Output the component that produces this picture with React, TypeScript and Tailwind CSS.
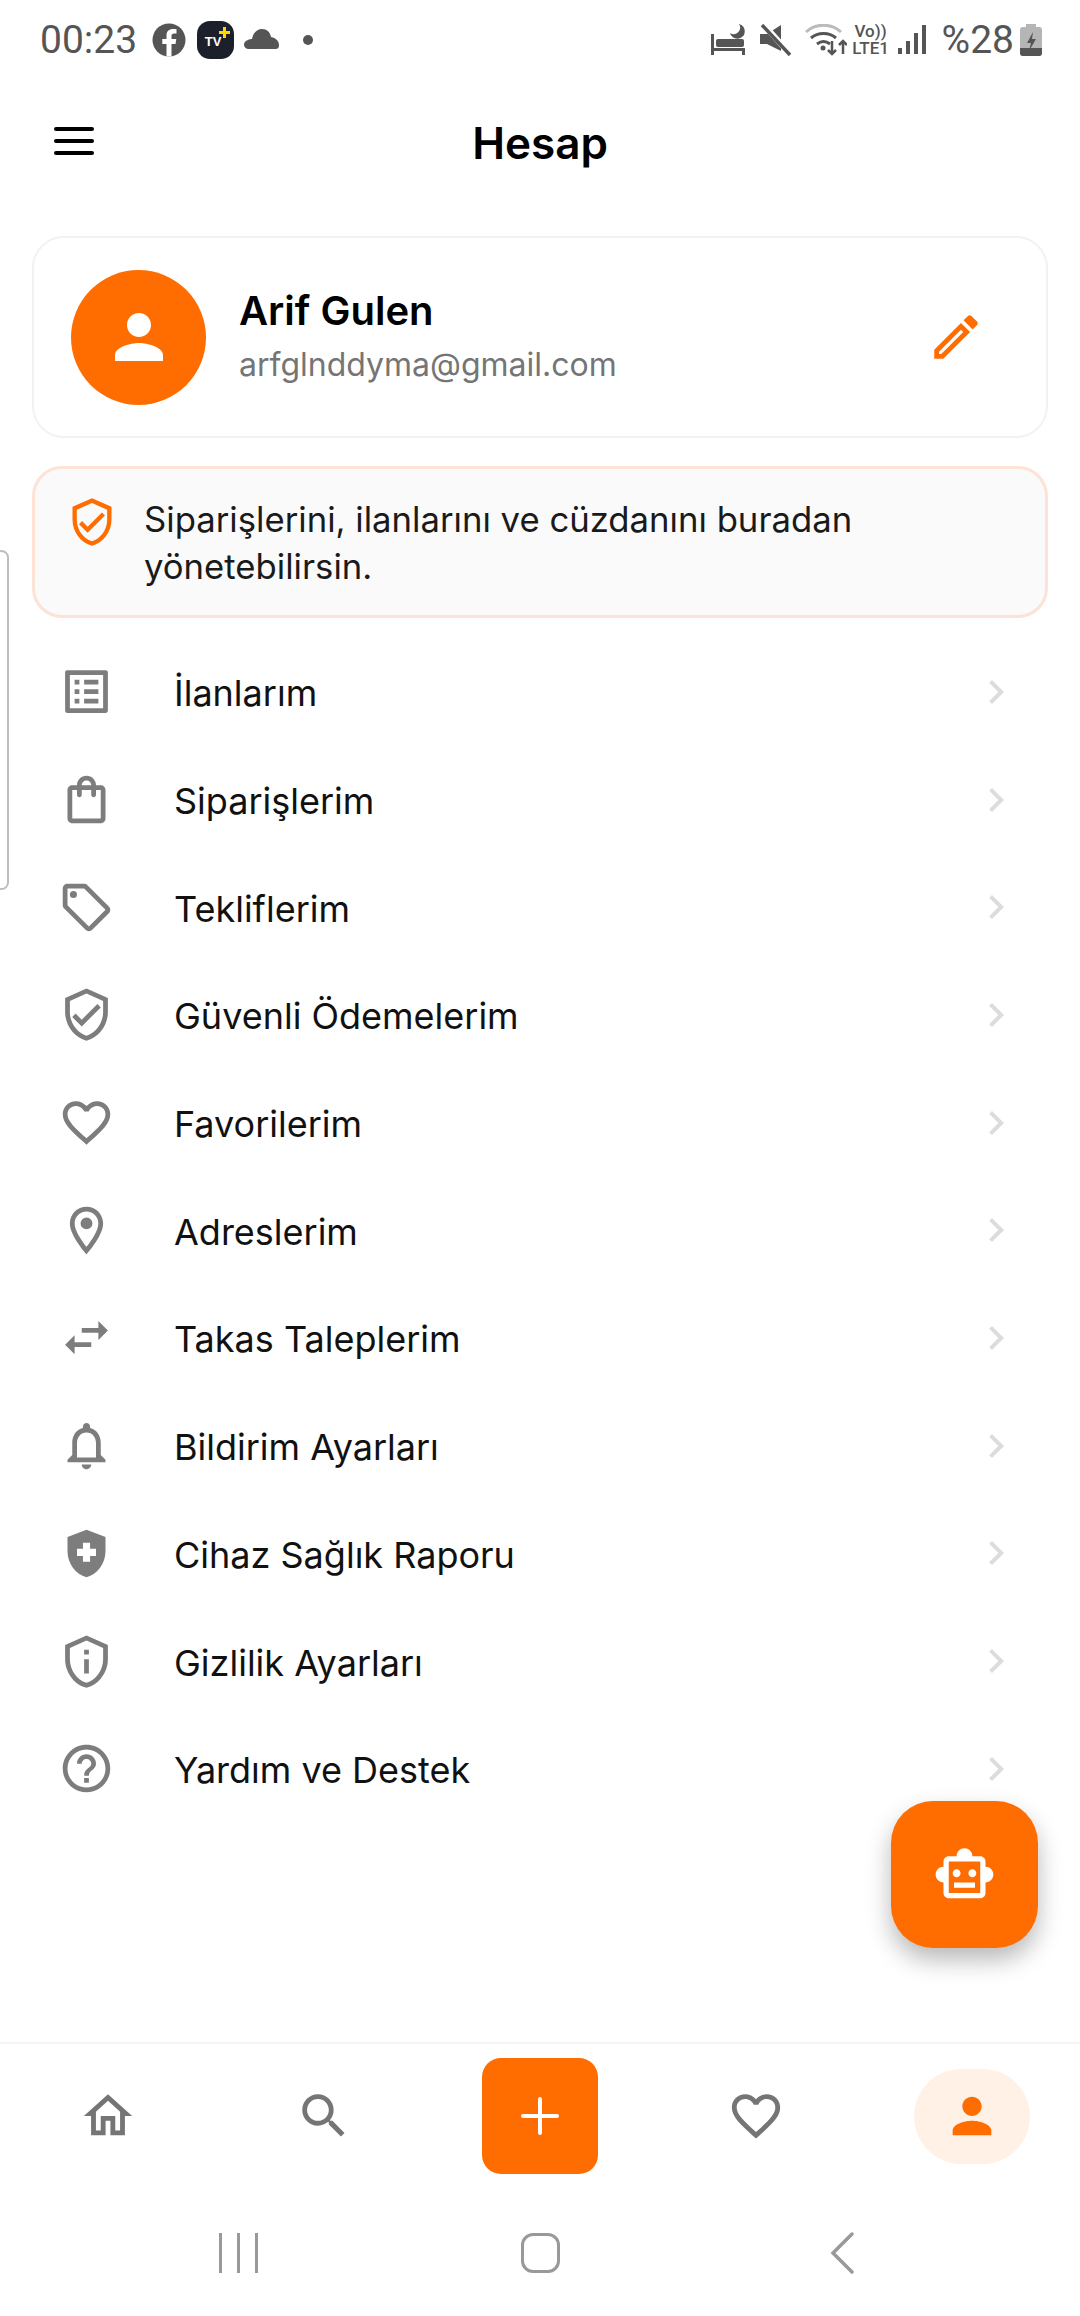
import React from 'react';

const ORANGE = '#ff6d00';

const icons = {
  list: 'M19 5v14H5V5h14m1.1-2H3.9c-.5 0-.9.4-.9.9v16.2c0 .4.4.9.9.9h16.2c.4 0 .9-.5.9-.9V3.9c0-.5-.5-.9-.9-.9zM11 7h6v2h-6V7zm0 4h6v2h-6v-2zm0 4h6v2h-6zM7 7h2v2H7zm0 4h2v2H7zm0 4h2v2H7z',
  bag: 'M18 6h-2c0-2.21-1.79-4-4-4S8 3.79 8 6H6c-1.1 0-2 .9-2 2v12c0 1.1.9 2 2 2h12c1.1 0 2-.9 2-2V8c0-1.1-.9-2-2-2zm-6-2c1.1 0 2 .9 2 2h-4c0-1.1.9-2 2-2zm6 16H6V8h2v2c0 .55.45 1 1 1s1-.45 1-1V8h4v2c0 .55.45 1 1 1s1-.45 1-1V8h2v12z',
  tag: 'M21.41 11.58l-9-9C12.05 2.22 11.55 2 11 2H4c-1.1 0-2 .9-2 2v7c0 .55.22 1.05.59 1.42l9 9c.36.36.86.58 1.41.58s1.05-.22 1.41-.59l7-7c.37-.36.59-.86.59-1.41s-.23-1.06-.59-1.42zM13 20.01L4 11V4h7v-.01l9 9-7 7.02zM6.5 5A1.5 1.5 0 1 0 6.5 8A1.5 1.5 0 1 0 6.5 5z',
  shieldCheck: 'M12 1L3 5v6c0 5.55 3.84 10.74 9 12 5.16-1.26 9-6.45 9-12V5l-9-4zm7 10c0 4.52-2.98 8.69-7 9.93-4.02-1.24-7-5.41-7-9.93V6.3l7-3.11 7 3.11V11zm-11.59.59L6 13l4 4 8-8-1.41-1.42L10 14.17z',
  heart: 'M16.5 3c-1.74 0-3.41.81-4.5 2.09C10.91 3.81 9.24 3 7.5 3 4.42 3 2 5.42 2 8.5c0 3.78 3.4 6.86 8.55 11.54L12 21.35l1.45-1.32C18.6 15.36 22 12.28 22 8.5 22 5.42 19.58 3 16.5 3zm-4.4 15.55l-.1.1-.1-.1C7.14 14.24 4 11.39 4 8.5 4 6.5 5.5 5 7.5 5c1.54 0 3.04.99 3.57 2.36h1.87C13.46 5.99 14.96 5 16.5 5c2 0 3.5 1.5 3.5 3.5 0 2.89-3.14 5.74-7.9 10.05z',
  pin: 'M12 2C8.13 2 5 5.13 5 9c0 5.25 7 13 7 13s7-7.75 7-13c0-3.87-3.13-7-7-7zM7 9c0-2.76 2.24-5 5-5s5 2.24 5 5c0 2.88-2.88 7.19-5 9.88C9.92 16.21 7 11.85 7 9zM12 6.5A2.5 2.5 0 1 0 12 11.5A2.5 2.5 0 1 0 12 6.5z',
  swap: 'M6.99 11L3 15l3.99 4v-3H14v-2H6.99v-3zM21 9l-4-4v3h-7v2h7v3l4-4z',
  bell: 'M12 22c1.1 0 2-.9 2-2h-4c0 1.1.9 2 2 2zm6-6v-5c0-3.07-1.63-5.64-4.5-6.32V4c0-.83-.67-1.5-1.5-1.5s-1.5.67-1.5 1.5v.68C7.64 5.36 6 7.92 6 11v5l-2 2v1h16v-1l-2-2zm-2 1H8v-6c0-2.48 1.51-4.5 4-4.5s4 2.02 4 4.5v6z',
  health: 'M10.5 13H8v-3h2.5V7.5h3V10H16v3h-2.5v2.5h-3V13zM12 2L4 5v6.09c0 5.05 3.41 9.76 8 10.91 4.59-1.15 8-5.86 8-10.91V5l-8-3z',
  privacy: 'M12 3.19l7 3.11V11c0 4.52-2.98 8.69-7 9.93-4.02-1.24-7-5.41-7-9.93V6.3l7-3.11M12 1L3 5v6c0 5.55 3.84 10.74 9 12 5.16-1.26 9-6.45 9-12V5l-9-4zm-1 6h2v2h-2zm0 4h2v6h-2z',
  help: 'M11 18h2v-2h-2v2zm1-16C6.48 2 2 6.48 2 12s4.48 10 10 10 10-4.48 10-10S17.52 2 12 2zm0 18c-4.41 0-8-3.59-8-8s3.59-8 8-8 8 3.59 8 8-3.59 8-8 8zm0-14c-2.21 0-4 1.79-4 4h2c0-1.1.9-2 2-2s2 .9 2 2c0 2-3 1.75-3 5h2c0-2.25 3-2.5 3-5 0-2.21-1.79-4-4-4z',
  home: 'M12 5.69l5 4.5V18h-2v-6H9v6H7v-7.81l5-4.5M12 3L2 12h3v8h6v-6h2v6h6v-8h3L12 3z',
  search: 'M15.5 14h-.79l-.28-.27C15.41 12.59 16 11.11 16 9.5 16 5.91 13.09 3 9.5 3S3 5.91 3 9.5 5.91 16 9.5 16c1.61 0 3.09-.59 4.23-1.57l.27.28v.79l5 4.99L20.49 19l-4.99-5zm-6 0C7.01 14 5 11.99 5 9.5S7.01 5 9.5 5 14 7.01 14 9.5 11.99 14 9.5 14z',
  person: 'M12 12c2.21 0 4-1.79 4-4s-1.79-4-4-4-4 1.79-4 4 1.79 4 4 4zm0 2c-2.67 0-8 1.34-8 4v2h16v-2c0-2.66-5.33-4-8-4z',
  edit: 'M3 17.25V21h3.75L17.81 9.94l-3.75-3.75L3 17.25zM5.92 19H5v-.92l9.06-9.06.92.92L5.92 19zM20.71 5.63l-2.34-2.34c-.2-.2-.45-.29-.71-.29s-.51.1-.7.29l-1.83 1.83 3.75 3.75 1.83-1.83c.39-.39.39-1.02 0-1.41z',
  robot: 'M20 9V7c0-1.1-.9-2-2-2h-3c0-1.66-1.34-3-3-3S9 3.34 9 5H6c-1.1 0-2 .9-2 2v2c-1.66 0-3 1.34-3 3s1.34 3 3 3v4c0 1.1.9 2 2 2h12c1.1 0 2-.9 2-2v-4c1.66 0 3-1.34 3-3s-1.34-3-3-3zm-2 10H6V7h12v12zm-9-6c-.83 0-1.5-.67-1.5-1.5S8.17 10 9 10s1.5.67 1.5 1.5S9.83 13 9 13zm7.5-1.5c0 .83-.67 1.5-1.5 1.5s-1.5-.67-1.5-1.5.67-1.5 1.5-1.5 1.5.67 1.5 1.5zM8 15h8v2H8v-2z',
  chevron: 'M10 6L8.59 7.41 13.17 12l-4.58 4.59L10 18l6-6z',
};

const MIcon = ({ d, size, color }: { d: string; size: number; color: string }) => (
  <svg width={size} height={size} viewBox="0 0 24 24" fill={color} fillRule="evenodd" className="shrink-0">
    <path d={d} />
  </svg>
);

const menuItems = [
  { label: 'İlanlarım', icon: icons.list },
  { label: 'Siparişlerim', icon: icons.bag },
  { label: 'Tekliflerim', icon: icons.tag },
  { label: 'Güvenli Ödemelerim', icon: icons.shieldCheck },
  { label: 'Favorilerim', icon: icons.heart },
  { label: 'Adreslerim', icon: icons.pin },
  { label: 'Takas Taleplerim', icon: icons.swap },
  { label: 'Bildirim Ayarları', icon: icons.bell },
  { label: 'Cihaz Sağlık Raporu', icon: icons.health },
  { label: 'Gizlilik Ayarları', icon: icons.privacy },
  { label: 'Yardım ve Destek', icon: icons.help },
];

const StatusBar = () => (
  <div className="h-[80px] shrink-0 flex items-center justify-between pl-[40px] pr-[38px] text-[#555] font-['Roboto',sans-serif]">
    <div className="flex items-center">
      <span className="text-[39px] leading-none">00:23</span>
      <svg width="34" height="34" viewBox="0 0 34 34" className="ml-[15px]">
        <circle cx="17" cy="17" r="16.5" fill="#555" />
        <path d="M19.5 33.5V21h4l.8-5h-4.800v-3c0-1.500.7-2.500 2.700-2.500h2.300V6.300c-1-.2-2.300-.3-3.500-.3-4 0-6.500 2.300-6.500 6.500V16h-4.200v5h4.200v12.500z" fill="#fff" />
      </svg>
      <div className="ml-[11px] w-[37px] h-[38px] rounded-[13px] bg-[#1b202b] flex items-center justify-center relative">
        <span className="text-white text-[13px] font-bold leading-none font-['Liberation_Sans',sans-serif] mr-[5px] mt-[3px]">TV</span>
        <span className="absolute right-[4px] top-[10px] w-[11px] h-[3px] bg-[#ffd800]" />
        <span className="absolute right-[8px] top-[6px] w-[3px] h-[11px] bg-[#ffd800]" />
      </div>
      <svg width="36" height="22" viewBox="0 0 36 22" className="ml-[9px] mb-[3px]">
        <path d="M6 21c-6 0-7-7-1-9 1-1 3-1 4-1 1-6 5-10 10-10 5 0 8 3 9 8 5 1 8 4 8 8 0 3-1 4-4 4z" fill="#555" />
      </svg>
      <span className="ml-[24px] w-[10px] h-[10px] rounded-full bg-[#555]" />
    </div>
    <div className="flex items-center">
      <svg width="35" height="32" viewBox="0 0 35 32" fill="#555">
        <rect x="0" y="10" width="3" height="21" />
        <rect x="5" y="15" width="28" height="8" rx="2" />
        <rect x="0" y="24" width="34" height="3" />
        <rect x="31" y="24" width="3" height="7" />
        <path d="M28 0a7.500 7.500 0 1 1-9 9 6.500 6.500 0 0 0 9-9z" />
      </svg>
      <svg width="32" height="32" viewBox="0 0 32 32" className="ml-[14px]">
        <path d="M0 10h7l14-9v26L7 20H0z" fill="#555" />
        <path d="M3 0l28 31" stroke="#fff" strokeWidth="6" />
        <path d="M2 1l28 30" stroke="#555" strokeWidth="3.500" />
      </svg>
      <svg width="42" height="32" viewBox="0 0 42 32" className="ml-[13px]" fill="none">
        <path d="M1 8c10-9 25-9 35 0" stroke="#bbb" strokeWidth="3" />
        <path d="M6 14c7-6 18-6 25 0" stroke="#555" strokeWidth="3" />
        <path d="M12 20c4-3 9-3 13 0" stroke="#555" strokeWidth="3" />
        <circle cx="18" cy="24" r="2.500" fill="#555" />
        <path d="M27 17v13m-4-4l4 4 4-4M38 30V17m-4 4l4-4 4 4" stroke="#555" strokeWidth="2.500" />
      </svg>
      <div className="ml-[4px] w-[40px] flex flex-col items-center text-[#555] font-medium leading-none">
        <span className="text-[17px] h-[17px]">Vo))</span>
        <span className="text-[17px]">LTE1</span>
      </div>
      <svg width="28" height="30" viewBox="0 0 28 30" className="ml-[7px]" fill="#555">
        <rect x="0" y="23" width="4" height="6" />
        <rect x="8" y="16" width="4" height="13" />
        <rect x="16" y="8" width="4" height="21" />
        <rect x="24" y="0" width="4" height="29" />
      </svg>
      <span className="ml-[16px] text-[39px] leading-none">%28</span>
      <svg width="22" height="32" viewBox="0 0 22 32" className="ml-[6px]">
        <path d="M6 0h10v3h3a3 3 0 0 1 3 3v23a3 3 0 0 1-3 3H3a3 3 0 0 1-3-3V6a3 3 0 0 1 3-3h3z" fill="#b5b5b5" />
        <path d="M0 24h22v5a3 3 0 0 1-3 3H3a3 3 0 0 1-3-3z" fill="#555" />
        <path d="M13 8l-6 11h4l-2 8 7-12h-4z" fill="#555" />
      </svg>
    </div>
  </div>
);

export default function App() {
  return (
    <div className="relative w-[1080px] h-[2316px] overflow-hidden bg-white flex flex-col font-['Inter',sans-serif] text-[#111]">
      <StatusBar />

      <header className="relative h-[124px] shrink-0 flex items-center justify-center">
        <div className="absolute left-[54px] top-[47px] w-[40px] flex flex-col gap-[8px]">
          <span className="h-[4px] rounded-full bg-black" />
          <span className="h-[4px] rounded-full bg-black" />
          <span className="h-[4px] rounded-full bg-black" />
        </div>
        <h1 className="text-[44px] font-semibold text-black mt-[1px]">Hesap</h1>
      </header>

      <section className="mx-[32px] mt-[32px] h-[202px] rounded-[32px] border-[2px] border-[#f2f2f2] flex items-center pl-[37px] pr-[61px] shrink-0">
        <div className="w-[135px] h-[135px] rounded-full flex items-center justify-center bg-[#ff6d00]">
          <MIcon d={icons.person} size={72} color="#fff" />
        </div>
        <div className="ml-[33px] flex-1">
          <div className="text-[40px] font-semibold leading-[50px] text-black mt-[-3px]">Arif Gulen</div>
          <div className="mt-[9px] text-[32px] leading-[40px] text-[#757575]">arfglnddyma@gmail.com</div>
        </div>
        <MIcon d={icons.edit} size={58} color={ORANGE} />
      </section>

      <section className="mx-[32px] mt-[28px] h-[152px] rounded-[30px] border-[3px] border-[#fde3d5] bg-[#fafafa] flex items-start pl-[31px] pr-[40px] pt-[27px] shrink-0">
        <MIcon d={icons.shieldCheck} size={52} color={ORANGE} />
        <p className="ml-[26px] text-[34.7px] leading-[47px] text-[#1a1a1a]">Siparişlerini, ilanlarını ve cüzdanını buradan yönetebilirsin.</p>
      </section>

      <nav className="mt-[20px] shrink-0">
        {menuItems.map((item) => (
          <div key={item.label} className="h-[107.7px] flex items-center pl-[58px] pr-[60px]">
            <MIcon d={item.icon} size={57} color="#7d7d7d" />
            <span className="ml-[59px] mt-[3px] flex-1 text-[36px] text-[#111]">{item.label}</span>
            <MIcon d={icons.chevron} size={48} color="#dcdcdc" />
          </div>
        ))}
      </nav>

      <div className="flex-1" />

      <div className="h-[148px] shrink-0 border-t-[2px] border-[#f4f4f4] grid grid-cols-5 items-center pb-[2px]">
        <div className="flex justify-center"><MIcon d={icons.home} size={58} color="#757575" /></div>
        <div className="flex justify-center"><MIcon d={icons.search} size={58} color="#757575" /></div>
        <div className="flex justify-center">
          <div className="w-[116px] h-[116px] rounded-[19px] bg-[#ff6d00] flex items-center justify-center">
            <svg width="38" height="38" viewBox="0 0 38 38" stroke="#fff" strokeWidth="4" strokeLinecap="round">
              <path d="M19 2v34M2 19h34" />
            </svg>
          </div>
        </div>
        <div className="flex justify-center"><MIcon d={icons.heart} size={58} color="#757575" /></div>
        <div className="flex justify-center">
          <div className="w-[116px] h-[95px] rounded-full bg-[#fff1e6] flex items-center justify-center">
            <MIcon d={icons.person} size={58} color={ORANGE} />
          </div>
        </div>
      </div>

      <div className="h-[126px] shrink-0 grid grid-cols-3 items-center pl-[87px] pr-[87px]">
        <div className="flex justify-center gap-[15px]">
          <span className="w-[3px] h-[40px] bg-[#999]" />
          <span className="w-[3px] h-[40px] bg-[#999]" />
          <span className="w-[3px] h-[40px] bg-[#999]" />
        </div>
        <div className="flex justify-center">
          <span className="w-[39px] h-[40px] rounded-[12px] border-[3px] border-[#999]" />
        </div>
        <div className="flex justify-center">
          <svg width="24" height="42" viewBox="0 0 24 42" fill="none" stroke="#999" strokeWidth="3.500" strokeLinecap="round">
            <path d="M22 2L3 21l19 19" />
          </svg>
        </div>
      </div>

      {/* edge handle on the left */}
      <div className="absolute left-[-6px] top-[550px] w-[15px] h-[340px] rounded-[10px] border-[2px] border-[#bdbdbd] bg-white" />

      <button className="absolute left-[891px] top-[1801px] w-[147px] h-[147px] rounded-[42px] bg-[#ff6d00] flex items-center justify-center shadow-[0_12px_24px_rgba(0,0,0,0.28)]">
        <MIcon d={icons.robot} size={63} color="#fff" />
      </button>
    </div>
  );
}
